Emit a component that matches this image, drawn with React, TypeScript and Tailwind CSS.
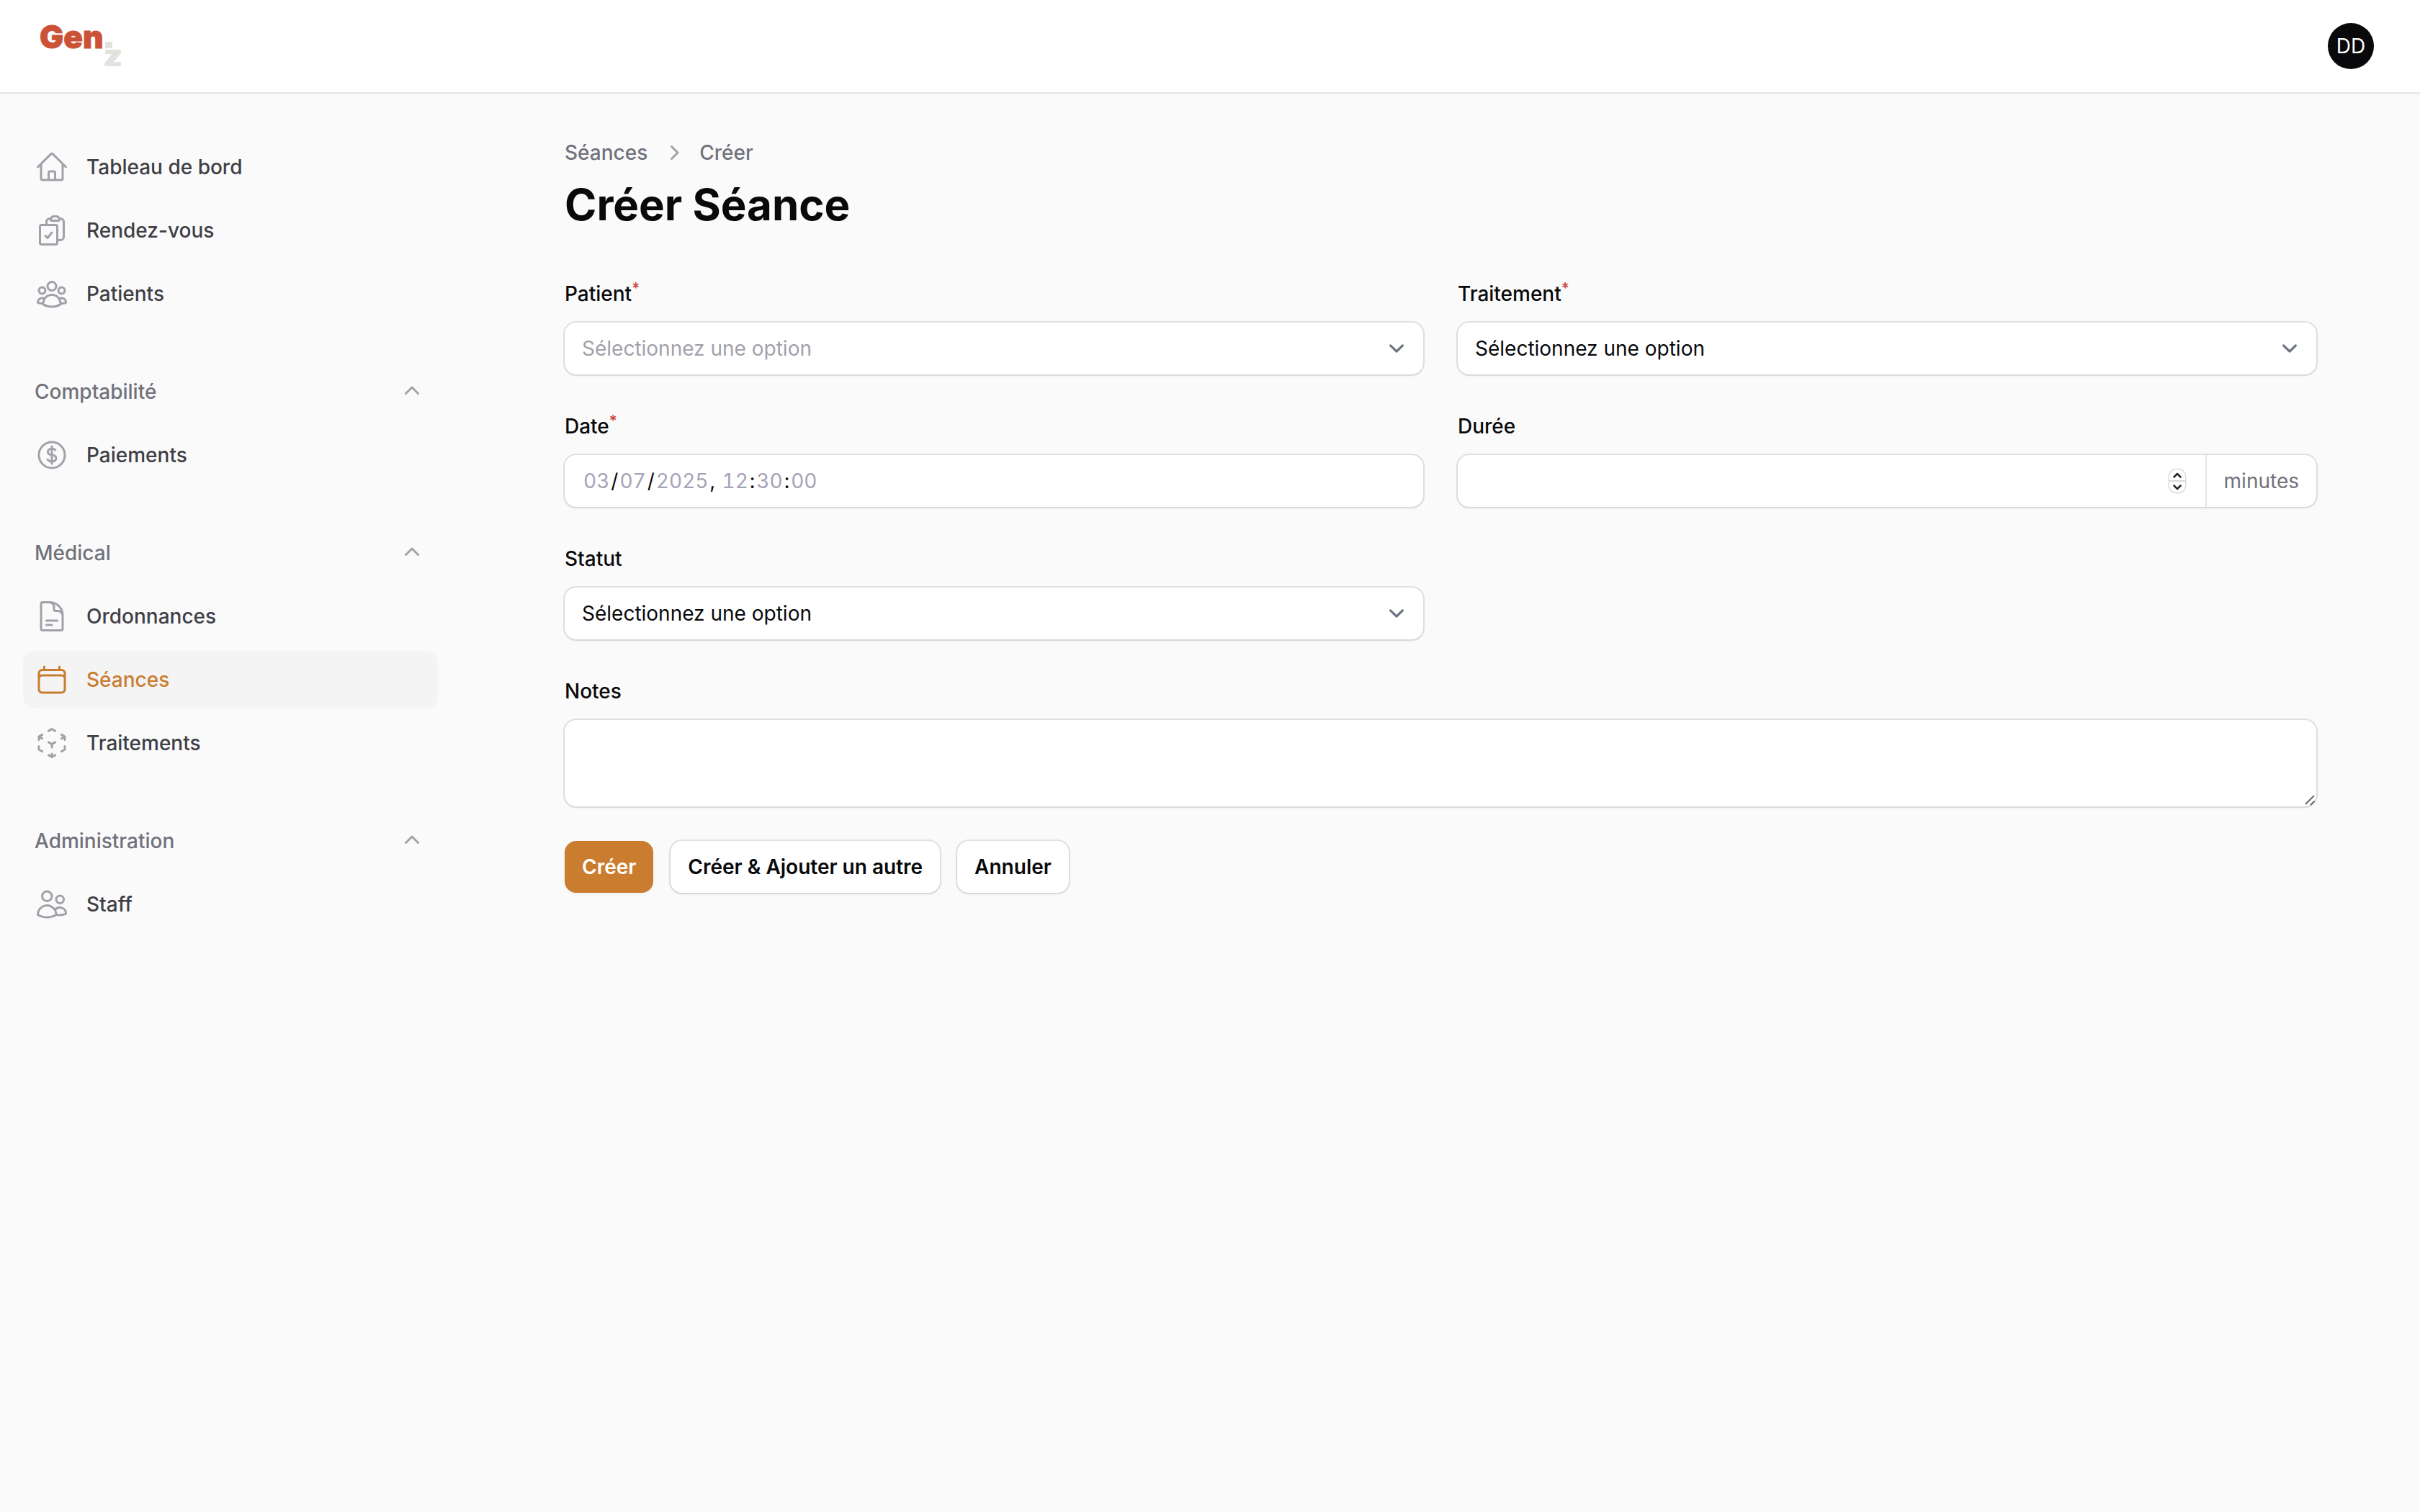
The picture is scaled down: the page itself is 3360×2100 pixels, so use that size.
import { useState, type ReactNode } from "react";
import type { IconType } from "react-icons";
import {
  HiMiniChevronRight,
  HiMiniChevronUp,
  HiOutlineCalendar,
  HiOutlineClipboardDocumentCheck,
  HiOutlineCubeTransparent,
  HiOutlineCurrencyDollar,
  HiOutlineDocumentText,
  HiOutlineHome,
  HiOutlineUserGroup,
  HiOutlineUsers,
} from "react-icons/hi2";

type NavItem = { label: string; icon: IconType; active?: boolean };
type NavGroup = { label?: string; items: NavItem[] };

const groups: NavGroup[] = [
  {
    items: [
      { label: "Tableau de bord", icon: HiOutlineHome },
      { label: "Rendez-vous", icon: HiOutlineClipboardDocumentCheck },
      { label: "Patients", icon: HiOutlineUserGroup },
    ],
  },
  { label: "Comptabilité", items: [{ label: "Paiements", icon: HiOutlineCurrencyDollar }] },
  {
    label: "Médical",
    items: [
      { label: "Ordonnances", icon: HiOutlineDocumentText },
      { label: "Séances", icon: HiOutlineCalendar, active: true },
      { label: "Traitements", icon: HiOutlineCubeTransparent },
    ],
  },
  { label: "Administration", items: [{ label: "Staff", icon: HiOutlineUsers }] },
];

const frame =
  "rounded-2xl bg-white ring-2 ring-[#09090b]/10 shadow-[0_2px_4px_rgba(0,0,0,0.05)]";

function Logo() {
  return (
    <a href="#" aria-label="Gen z" className="block">
      <svg width="116" height="88" viewBox="0 0 116 88" aria-hidden="true">
        <text x="3" y="47" fill="#cb5237" stroke="#cb5237" strokeWidth="1" fontFamily="Inter, sans-serif" fontWeight="900" fontSize="44">
          Gen
        </text>
        <rect x="94" y="38" width="10" height="9" fill="#e3e2de" />
        <path d="M94 49H116V54L106 66H116V72H93V68L103 55H94Z" fill="#e3e2de" />
      </svg>
    </a>
  );
}

function Topbar() {
  return (
    <header className="relative flex h-32 items-center justify-between bg-white pl-[52px] pr-16 ring-2 ring-[#09090b]/5 shadow-[0_2px_4px_rgba(0,0,0,0.05)]">
      <Logo />
      <button
        type="button"
        className="flex size-16 items-center justify-center rounded-full bg-[#09090b] text-[28px] text-white"
      >
        DD
      </button>
    </header>
  );
}

function Sidebar() {
  return (
    <aside className="w-[640px] shrink-0 px-8 py-16">
      <nav className="flex flex-col gap-14">
        {groups.map((group, i) => (
          <div key={i} className="flex flex-col gap-2">
            {group.label && (
              <button type="button" className="flex items-center justify-between py-4 pl-4 text-left">
                <span className="text-[28px] font-medium leading-[48px] text-[#71717a]">{group.label}</span>
                <span className="flex w-[72px] justify-center">
                  <HiMiniChevronUp className="size-10 text-[#a1a1aa]" />
                </span>
              </button>
            )}
            <ul className="flex flex-col gap-2">
              {group.items.map(({ label, icon: Icon, active }) => (
                <li key={label}>
                  <a
                    href="#"
                    aria-current={active ? "page" : undefined}
                    className={
                      active
                        ? "flex items-center gap-6 rounded-2xl bg-[#f4f4f4] p-4 text-[#ca7c2f]"
                        : "flex items-center gap-6 rounded-2xl p-4 text-[#3f3f46]"
                    }
                  >
                    <Icon className={active ? "size-12" : "size-12 text-[#a1a1aa]"} />
                    <span className="text-[28px] font-medium leading-[48px]">{label}</span>
                  </a>
                </li>
              ))}
            </ul>
          </div>
        ))}
      </nav>
    </aside>
  );
}

function Field({ id, label, required, children }: { id: string; label: string; required?: boolean; children: ReactNode }) {
  return (
    <div className="flex flex-col gap-4">
      <label htmlFor={id} className="self-start text-[28px] font-medium leading-[48px]">
        {label}
        {required && <sup className="text-[21px] text-[#cb4035]">*</sup>}
      </label>
      {children}
    </div>
  );
}

function Select({ id, muted }: { id: string; muted?: boolean }) {
  return (
    <div className={`relative ${frame}`}>
      <select
        id={id}
        className={
          muted
            ? "block h-[72px] w-full appearance-none rounded-2xl bg-transparent pl-6 pr-20 text-[28px] leading-[48px] text-[#a1a1aa] outline-none"
            : "block h-[72px] w-full appearance-none rounded-2xl bg-transparent pl-6 pr-20 text-[28px] leading-[48px] text-[#09090b] outline-none"
        }
      >
        <option>Sélectionnez une option</option>
      </select>
      <svg
        viewBox="0 0 20 20"
        fill="none"
        className="pointer-events-none absolute inset-y-0 right-4 my-auto size-[42px]"
        aria-hidden="true"
      >
        <path d="M6 8l4 4 4-4" stroke="#6b7280" strokeWidth="1.5" strokeLinecap="round" strokeLinejoin="round" />
      </svg>
    </div>
  );
}

function DateInput({ id }: { id: string }) {
  return (
    <div className={frame}>
      <input
        id={id}
        type="datetime-local"
        step={1}
        defaultValue="2025-03-07T12:30:00"
        className="block h-[72px] w-full rounded-2xl bg-transparent px-6 text-[28px] leading-[48px] text-[#09090b] tabular-nums outline-none [&::-webkit-calendar-picker-indicator]:hidden [&::-webkit-datetime-edit-ampm-field]:hidden [&::-webkit-datetime-edit-day-field]:px-0.5 [&::-webkit-datetime-edit-day-field]:text-[#a5a3b5] [&::-webkit-datetime-edit-hour-field]:px-0.5 [&::-webkit-datetime-edit-hour-field]:text-[#a5a3b5] [&::-webkit-datetime-edit-minute-field]:px-0.5 [&::-webkit-datetime-edit-minute-field]:text-[#a5a3b5] [&::-webkit-datetime-edit-month-field]:px-0.5 [&::-webkit-datetime-edit-month-field]:text-[#a5a3b5] [&::-webkit-datetime-edit-second-field]:px-0.5 [&::-webkit-datetime-edit-second-field]:text-[#a5a3b5] [&::-webkit-datetime-edit-year-field]:px-0.5 [&::-webkit-datetime-edit-year-field]:text-[#a5a3b5]"
      />
    </div>
  );
}

function DurationInput({ id }: { id: string }) {
  const [value, setValue] = useState("");
  const step = (by: number) => setValue(String(Number(value) + by));
  return (
    <div className={`flex h-[72px] items-center ${frame}`}>
      <input
        id={id}
        type="number"
        value={value}
        onChange={(e) => setValue(e.target.value)}
        className="h-full min-w-0 flex-1 rounded-2xl bg-transparent pl-6 text-[28px] outline-none [appearance:textfield] [&::-webkit-inner-spin-button]:appearance-none"
      />
      <div className="mr-7 flex h-8 w-[22px] flex-col divide-y-2 divide-[#d9d9d9] overflow-hidden rounded-[10px] bg-white shadow-[0_0_2px_1px_rgba(0,0,0,0.2)]">
        <button type="button" aria-label="Augmenter" onClick={() => step(1)} className="flex flex-1 items-center justify-center">
          <svg width="12" height="8" viewBox="0 0 12 8" fill="none">
            <path d="M1.5 6.5 6 2l4.5 4.5" stroke="#262626" strokeWidth="2.5" strokeLinecap="round" strokeLinejoin="round" />
          </svg>
        </button>
        <button type="button" aria-label="Diminuer" onClick={() => step(-1)} className="flex flex-1 items-center justify-center">
          <svg width="12" height="8" viewBox="0 0 12 8" fill="none">
            <path d="M1.5 1.5 6 6l4.5-4.5" stroke="#262626" strokeWidth="2.5" strokeLinecap="round" strokeLinejoin="round" />
          </svg>
        </button>
      </div>
      <span className="flex h-full items-center border-l-2 border-[#e4e4e7] px-6 text-[28px] text-[#71717a]">minutes</span>
    </div>
  );
}

function NotesInput({ id }: { id: string }) {
  return (
    <div className={`relative ${frame}`}>
      <textarea
        id={id}
        rows={2}
        className="block w-full resize-none rounded-2xl bg-transparent px-6 py-3 text-[28px] leading-[48px] outline-none"
      />
      <svg
        width="16"
        height="16"
        viewBox="0 0 16 16"
        className="pointer-events-none absolute bottom-0 right-0"
        stroke="#6b6b6b"
        strokeWidth="2"
        strokeLinecap="round"
        aria-hidden="true"
      >
        <path d="M1.5 12.5 12.5 1.5M8.5 13.5 13 9" />
      </svg>
    </div>
  );
}

function Breadcrumbs() {
  return (
    <ol className="flex items-center gap-4 text-[28px] font-medium leading-10 text-[#71717a]">
      <li>
        <a href="#">Séances</a>
      </li>
      <li className="flex items-center gap-4">
        <HiMiniChevronRight className="size-10 text-[#a1a1aa]" />
        <a href="#">Créer</a>
      </li>
    </ol>
  );
}

export default function App() {
  const secondary = `px-6 py-3 text-[28px] font-semibold leading-[48px] ${frame}`;
  return (
    <div className="min-h-screen bg-[#fafafa] font-['Inter',sans-serif] text-[#09090b] antialiased">
      <Topbar />
      <div className="flex">
        <Sidebar />
        <main className="mx-auto w-full max-w-[2560px] flex-1 px-16 py-16">
          <Breadcrumbs />
          <h1 className="mt-4 text-[60px] font-bold leading-[72px]">Créer Séance</h1>
          <form className="mt-16 flex flex-col gap-12" onSubmit={(e) => e.preventDefault()}>
            <div className="grid grid-cols-2 gap-12">
              <Field id="patient" label="Patient" required>
                <Select id="patient" muted />
              </Field>
              <Field id="traitement" label="Traitement" required>
                <Select id="traitement" />
              </Field>
              <Field id="date" label="Date" required>
                <DateInput id="date" />
              </Field>
              <Field id="duree" label="Durée">
                <DurationInput id="duree" />
              </Field>
              <Field id="statut" label="Statut">
                <Select id="statut" />
              </Field>
            </div>
            <Field id="notes" label="Notes">
              <NotesInput id="notes" />
            </Field>
            <div className="flex gap-6">
              <button
                type="submit"
                className="rounded-2xl bg-[#ca7c2f] px-6 py-3 text-[28px] font-semibold leading-[48px] text-white shadow-[0_2px_4px_rgba(0,0,0,0.05)]"
              >
                Créer
              </button>
              <button type="button" className={secondary}>
                Créer &amp; Ajouter un autre
              </button>
              <button type="button" className={secondary}>
                Annuler
              </button>
            </div>
          </form>
        </main>
      </div>
    </div>
  );
}
